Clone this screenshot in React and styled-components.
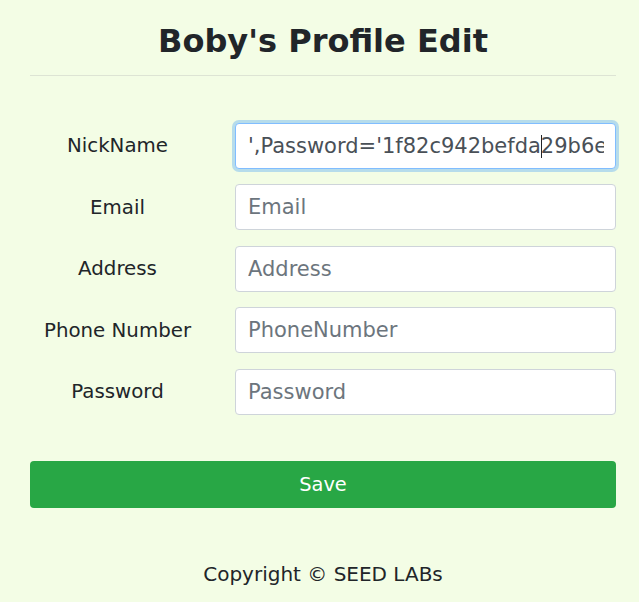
import React from "react";
import styled, { createGlobalStyle } from "styled-components";

const GlobalStyle = createGlobalStyle`
  html, body {
    margin: 0;
    background: #f3fde5;
  }
  body {
    font-family: "DejaVu Sans", Verdana, sans-serif;
    color: #212529;
  }
`;

const fields = [
  { label: "NickName", placeholder: "NickName", value: "',Password='1f82c942befda29b6e", focused: true },
  { label: "Email", placeholder: "Email" },
  { label: "Address", placeholder: "Address" },
  { label: "Phone Number", placeholder: "PhoneNumber" },
  { label: "Password", placeholder: "Password" },
];

const App = () => {
  return (
    <Page>
      <GlobalStyle />
      <Title>Boby's Profile Edit</Title>
      <Divider />
      <Form onSubmit={(e) => e.preventDefault()}>
        {fields.map((f) => (
          <FormRow key={f.label}>
            <Label>{f.label}</Label>
            <InputWrap>
              <Input
                type="text"
                placeholder={f.placeholder}
                defaultValue={f.value}
                readOnly
                $focused={f.focused}
              />
              {f.focused && <Caret />}
            </InputWrap>
          </FormRow>
        ))}
        <SaveButton type="submit">Save</SaveButton>
      </Form>
      <Footer>Copyright © SEED LABs</Footer>
    </Page>
  );
};

export default App;

const Page = styled.div`
  padding: 22px 23px 0 30px;
  display: flex;
  flex-direction: column;
`;

const Title = styled.h2`
  margin: 0;
  font-size: 32px;
  line-height: 1.2;
  font-weight: bold;
  text-align: center;
`;

const Divider = styled.hr`
  margin: 15px 0 0;
  border: 0;
  border-top: 1px solid #dde4d4;
`;

const Form = styled.form`
  margin-top: 46.5px;
  display: flex;
  flex-direction: column;
  gap: 15.5px;
`;

const FormRow = styled.div`
  display: grid;
  grid-template-columns: 175px 1fr;
  column-gap: 30px;
  align-items: center;
`;

const Label = styled.label`
  text-align: center;
  font-size: 19.8px;
`;

const InputWrap = styled.div`
  position: relative;
`;

const Input = styled.input`
  display: block;
  box-sizing: border-box;
  width: 100%;
  height: 46px;
  padding: 0 11px 0 12px;
  font-family: "DejaVu Sans", Verdana, sans-serif;
  font-size: 21px;
  color: #495057;
  background: #fff;
  border: 1px solid ${(p) => (p.$focused ? "#80bdff" : "#ced4da")};
  border-radius: 4px;
  box-shadow: ${(p) => (p.$focused ? "0 0 0 3px rgba(0, 123, 255, 0.25)" : "none")};
  outline: none;

  &::placeholder {
    color: #6c757d;
  }
`;

const Caret = styled.span`
  position: absolute;
  left: 306px;
  top: 12px;
  width: 1px;
  height: 23px;
  background: #212529;
`;

const SaveButton = styled.button`
  margin-top: 31px;
  height: 47px;
  border: 0;
  border-radius: 4px;
  background: #28a745;
  color: #fff;
  font-family: "DejaVu Sans", Verdana, sans-serif;
  font-size: 19.4px;
  cursor: pointer;
`;

const Footer = styled.footer`
  margin-top: 54px;
  text-align: center;
  font-size: 20px;
`;
